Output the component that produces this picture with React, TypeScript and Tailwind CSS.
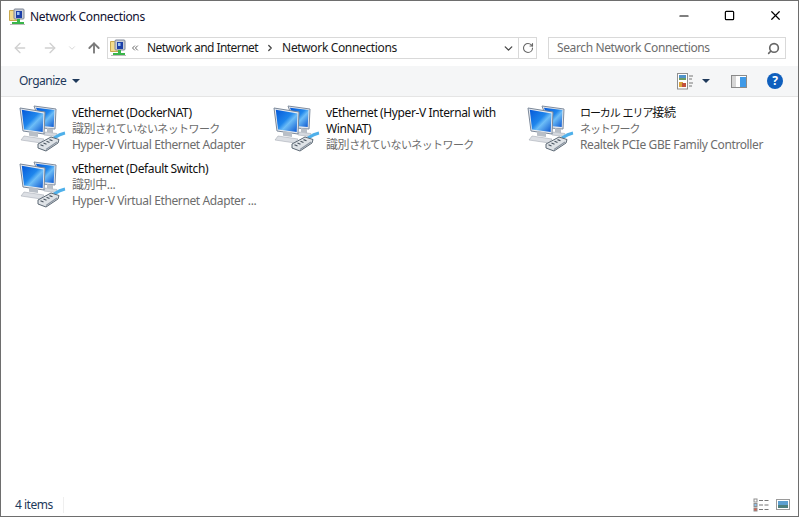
import React from 'react';
import { ArrowLeft, ArrowRight, ArrowUp, ChevronDown, ChevronRight, ChevronsLeft, Minus, RotateCw, Search, Square, X } from 'lucide-react';

const FolderNetIcon: React.FC = () => (
  <svg width="18" height="18" viewBox="0 0 18 18" className="shrink-0">
    <path d="M0.5 2.5h4l1-1h4v11h-9z" fill="#f3dc8c" stroke="#c9a94e" />
    <rect x="5" y="1" width="10" height="10" rx="1" fill="#c8cdd6" stroke="#7f8796" />
    <rect x="7" y="3" width="6" height="7" fill="#1b3fa8" />
    <rect x="8" y="4" width="2.5" height="3" fill="#9cc3f0" />
    <rect x="8" y="11" width="3" height="3" fill="#39b54a" />
    <rect x="3" y="14" width="12" height="2" fill="#39b54a" />
    <rect x="1" y="16" width="15" height="1" fill="#bcbcbc" />
  </svg>
);

const NetworkIcon: React.FC<{ id: string }> = ({ id }) => (
  <svg width="48" height="48" viewBox="0 0 48 48" className="shrink-0">
    <defs>
      <linearGradient id={id} x1="0" y1="0" x2="1" y2="1">
        <stop offset="0" stopColor="#0558d8" />
        <stop offset="0.45" stopColor="#1f86ec" />
        <stop offset="0.6" stopColor="#6dbdf7" />
        <stop offset="1" stopColor="#0a55cf" />
      </linearGradient>
    </defs>
    {/* back monitor */}
    <path d="M16 1L38 4L37 24L24 23Z" fill="#e4e8ee" stroke="#7f8c9e" />
    <path d="M18 2.800L36.500 5L35.700 22L24 21Z" fill={`url(#${id})`} />
    <path d="M29 23l6 1v4l-6-1z" fill="#b9bfc7" />
    <path d="M27 27l12 1.500-1 3-12-1.500z" fill="#d5d9df" stroke="#9da4ae" strokeWidth="0.5" />
    {/* front monitor */}
    <path d="M2 3L27 7L26 29L5 26Z" fill="#e9ecf1" stroke="#7b8899" />
    <path d="M3.800 4.800L25.500 8.400L24.700 27L6 24.500Z" fill={`url(#${id})`} />
    <path d="M11 26l9 1.300v4.700l-9-1.300z" fill="#b9bfc7" />
    <path d="M6 31l20 3-3 4-20-3z" fill="#dcdfe4" stroke="#9aa1ab" strokeWidth="0.5" />
    {/* cable and plug */}
    <path d="M36 33c3-2 6-4 11-5" fill="none" stroke="#4fb0ea" strokeWidth="3" />
    <path d="M20 39l13-7 8 2.500-1 3.500-12 8-8-3z" fill="#dfe3e7" stroke="#5c6874" />
    <path d="M22.500 39.800l3 1.200M25.500 38l3 1.200M28.500 36.300l3 1.200M31.500 34.600l3 1.200" stroke="#4a5560" strokeWidth="1.200" />
    <path d="M28 44.500l11-7.500" stroke="#8a94a0" strokeWidth="1.200" />
  </svg>
);

const DetailsIcon: React.FC = () => (
  <svg width="17" height="17" viewBox="0 0 17 17" className="shrink-0">
    <rect x="0.5" y="0.5" width="10" height="15.5" fill="#fff" stroke="#8f8f8f" />
    <rect x="2" y="2" width="7" height="5" fill="#4f93c9" />
    <rect x="2" y="5" width="7" height="2" fill="#6d9c62" />
    <rect x="2" y="9" width="4" height="5" fill="#d9a23c" />
    <rect x="5" y="10" width="4" height="4" fill="#c2503c" />
    <path d="M12 3h4M12 6h3M12 10h4M12 13h3" stroke="#777" strokeWidth="1" />
  </svg>
);

const PaneIcon: React.FC = () => (
  <svg width="16" height="13" viewBox="0 0 16 13" className="shrink-0">
    <rect x="0.500" y="0.500" width="15" height="12" fill="#fff" stroke="#8a8a8a" />
    <rect x="1" y="1" width="4" height="11" fill="#8a8a8a" opacity="0.35" />
    <rect x="9" y="2" width="6" height="10" fill="#3f9ae8" />
  </svg>
);

const StatusDetailsIcon: React.FC = () => (
  <svg width="16" height="14" viewBox="0 0 16 14">
    <rect x="1" y="1" width="3" height="3" fill="#fff" stroke="#8f8f8f" />
    <rect x="1" y="5.500" width="3" height="3" fill="#8fc3ee" stroke="#8f8f8f" />
    <rect x="1" y="10" width="3" height="3" fill="#e05a4a" stroke="#8f8f8f" />
    <path d="M6 2.500h4M11.500 2.500h4M6 7h4M11.500 7h4M6 11.500h4M11.500 11.500h4" stroke="#777" strokeWidth="1" />
  </svg>
);

const StatusTilesIcon: React.FC = () => (
  <svg width="14" height="11" viewBox="0 0 14 11">
    <rect x="0.500" y="0.500" width="13" height="10" fill="#fff" stroke="#9a9a9a" />
    <rect x="2" y="2" width="10" height="4" fill="#5c9fd0" />
    <rect x="2" y="6" width="10" height="3" fill="#4d7f7c" />
  </svg>
);

// kana runs narrower than the kanji in the original UI font
const Kana: React.FC<{ children: React.ReactNode; tight?: boolean }> = ({ children, tight }) => (
  <span className={tight ? 'text-[11px] tracking-[-1.1px]' : 'text-[11px] tracking-[-0.6px]'}>{children}</span>
);

const unknownNetwork = (
  <>
    識別<Kana>されていないネットワーク</Kana>
  </>
);

const items: { id: string; name: React.ReactNode; status: React.ReactNode; device: string }[] = [
  { id: 'a', name: 'vEthernet (DockerNAT)', status: unknownNetwork, device: 'Hyper-V Virtual Ethernet Adapter' },
  { id: 'b', name: 'vEthernet (Hyper-V Internal with WinNAT)', status: unknownNetwork, device: '' },
  { id: 'c', name: <><Kana tight>ローカル</Kana><span className="ml-[3px]" /><Kana tight>エリア</Kana>接続</>, status: <Kana tight>ネットワーク</Kana>, device: 'Realtek PCIe GBE Family Controller' },
  { id: 'd', name: 'vEthernet (Default Switch)', status: '識別中...', device: 'Hyper-V Virtual Ethernet Adapter ...' },
];

const App: React.FC = () => {
  return (
    <div className="w-[799px] h-[517px] flex flex-col bg-white border border-[#6e6e6e] overflow-hidden text-[12px] leading-4 text-black font-['Noto_Sans','Noto_Sans_CJK_JP',sans-serif]">
      {/* Title bar */}
      <div className="h-[29px] flex items-center shrink-0">
        <div className="flex items-center gap-[3px] pl-2 pt-0.5">
          <FolderNetIcon />
          <span className="tracking-[-0.35px] text-[#101030]">Network Connections</span>
        </div>
        <div className="ml-auto flex items-center">
          <div className="w-[45px] flex justify-center"><Minus size={14} strokeWidth={1.2} absoluteStrokeWidth /></div>
          <div className="w-[46px] flex justify-center"><Square size={11} strokeWidth={1.2} absoluteStrokeWidth /></div>
          <div className="w-[46px] flex justify-center"><X size={15} strokeWidth={1.2} absoluteStrokeWidth /></div>
        </div>
      </div>

      {/* Navigation bar */}
      <div className="h-[36px] flex items-start pt-[7px] shrink-0">
        <div className="w-[106px] h-[22px] flex items-center pl-[11px] shrink-0">
          <ArrowLeft size={16} className="text-[#d0d0d0]" />
          <ArrowRight size={16} className="text-[#d0d0d0] ml-[14px]" />
          <ChevronDown size={10} className="text-[#d0d0d0] ml-[9px]" />
          <ArrowUp size={16} strokeWidth={2.8} className="text-[#7a7a7a] ml-[9px]" />
        </div>
        <div className="w-[430px] h-[22px] border border-[#d9d9d9] flex items-center shrink-0">
          <div className="ml-[2px]"><FolderNetIcon /></div>
          <ChevronsLeft size={10} strokeWidth={2.4} className="text-[#666] ml-[2px]" />
          <span className="ml-[7px] tracking-[-0.55px] text-[#1a1a1a]">Network and Internet</span>
          <ChevronRight size={10} strokeWidth={3} className="text-[#444] ml-[7px]" />
          <span className="ml-[7px] tracking-[-0.35px] text-[#1a1a1a]">Network Connections</span>
          <ChevronDown size={13} strokeWidth={2.4} className="text-[#444] ml-auto mr-[3px]" />
          <div className="w-[18px] h-full border-l border-[#d9d9d9] flex items-center justify-center">
            <RotateCw size={12} strokeWidth={2.2} className="text-[#666]" />
          </div>
        </div>
        <div className="ml-[11px] w-[238px] h-[22px] border border-[#d9d9d9] flex items-center pl-2 pr-[5px] shrink-0">
          <span className="tracking-[-0.38px] text-[#6d6d6d]">Search Network Connections</span>
          <Search size={13} strokeWidth={3} className="ml-auto text-[#666] -scale-x-100" />
        </div>
      </div>

      {/* Command bar */}
      <div className="h-[31px] bg-[#f5f6f7] border-b border-[#e5e5e5] flex items-center pl-[18px] shrink-0">
        <span className="tracking-[-0.5px] text-[#1e395b]">Organize</span>
        <div className="ml-[6px] w-0 h-0 border-x-4 border-x-transparent border-t-[4px] border-t-[#1e395b]" />
        <div className="ml-auto flex items-center pr-[15px]">
          <DetailsIcon />
          <div className="ml-[8px] w-0 h-0 border-x-4 border-x-transparent border-t-[4px] border-t-[#1e395b]" />
          <div className="ml-[21px] flex"><PaneIcon /></div>
          <div className="ml-[20px] w-4 h-4 rounded-full bg-[#0f5fbd] text-white flex items-center justify-center text-[12px] font-bold leading-none">?</div>
        </div>
      </div>

      {/* Items */}
      <div className="flex-1 min-h-0 grid grid-cols-[254px_254px_254px] auto-rows-[56px] content-start pl-[17px] pt-2">
        {items.map(item => (
          <div key={item.id} className="flex items-start gap-[6px]">
            <NetworkIcon id={`screen-${item.id}`} />
            <div className="w-[190px] tracking-[-0.38px]">
              <div className="text-[#101010]">{item.name}</div>
              <div className="text-[#6d6d6d]">{item.status}</div>
              {item.device && <div className="text-[#6d6d6d] whitespace-nowrap">{item.device}</div>}
            </div>
          </div>
        ))}
      </div>

      {/* Status bar */}
      <div className="h-[23px] flex items-center pl-[14px] pr-[8px] shrink-0">
        <span className="tracking-[-0.5px] text-[#1e395b]">4 items</span>
        <div className="ml-[10px] h-[16px] border-l border-[#efefef]" />
        <div className="ml-auto flex items-center gap-[7px]">
          <StatusDetailsIcon />
          <StatusTilesIcon />
        </div>
      </div>
    </div>
  );
};

export default App;
